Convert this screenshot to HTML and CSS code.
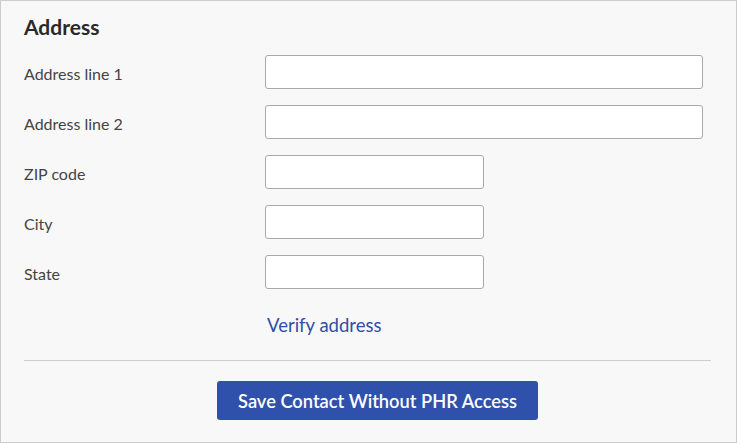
FILE: index.html
```html
<!DOCTYPE html>
<html>
<head>
<meta charset="utf-8">
<link rel="stylesheet" href="styles.css">
</head>
<body>
<div class="panel">
  <h2 class="title">Address</h2>
  <div class="rows">
    <div class="row"><label class="label">Address line 1</label><input class="field wide" type="text"></div>
    <div class="row"><label class="label">Address line 2</label><input class="field wide" type="text"></div>
    <div class="row"><label class="label">ZIP code</label><input class="field short" type="text"></div>
    <div class="row"><label class="label">City</label><input class="field short" type="text"></div>
    <div class="row"><label class="label">State</label><input class="field short" type="text"></div>
  </div>
  <div class="verify"><a class="link" href="#">Verify address</a></div>
  <hr class="divider">
  <div class="actions"><button class="btn">Save Contact Without PHR Access</button></div>
</div>
</body>
</html>
```
FILE: styles.css
```css
html, body { margin: 0; padding: 0; }
body { font-family: "Lato", "Open Sans", sans-serif; background: #fff; }
.panel {
  width: 737px; height: 443px; box-sizing: border-box;
  background: #f8f8f8; border: 1px solid #cccccc;
  padding: 0 25px 0 23px;
}
.title {
  margin: 13px 0 0 0; font-size: 21px; font-weight: 700; color: #2a2a2a;
  line-height: 26px;
}
.rows { margin-top: 15px; display: flex; flex-direction: column; gap: 16px; }
.row { display: flex; align-items: center; height: 34px; }
.label { width: 241px; font-size: 16px; color: #444; padding-top: 3px; }
.field {
  height: 34px; box-sizing: border-box; border: 1px solid #a9a9a9; border-radius: 3px;
  background: #fff; margin: 0; padding: 0 8px; font: inherit;
}
.wide { width: 438px; }
.short { width: 219px; }
.verify { margin-top: 25px; padding-left: 243px; line-height: 22px; }
.link { color: #2f4ea6; font-size: 18.5px; text-decoration: none; }
.divider { margin: 23px 0 0 0; border: 0; border-top: 1px solid #cccccc; height: 0; }
.actions { margin-top: 20px; padding-left: 193px; }
.btn {
  width: 321px; height: 39px; background: #2f50ab; color: #fff; border: 0; border-radius: 3px;
  font-family: inherit; font-size: 18.3px; font-weight: 600; padding: 0; cursor: pointer;
}
```
